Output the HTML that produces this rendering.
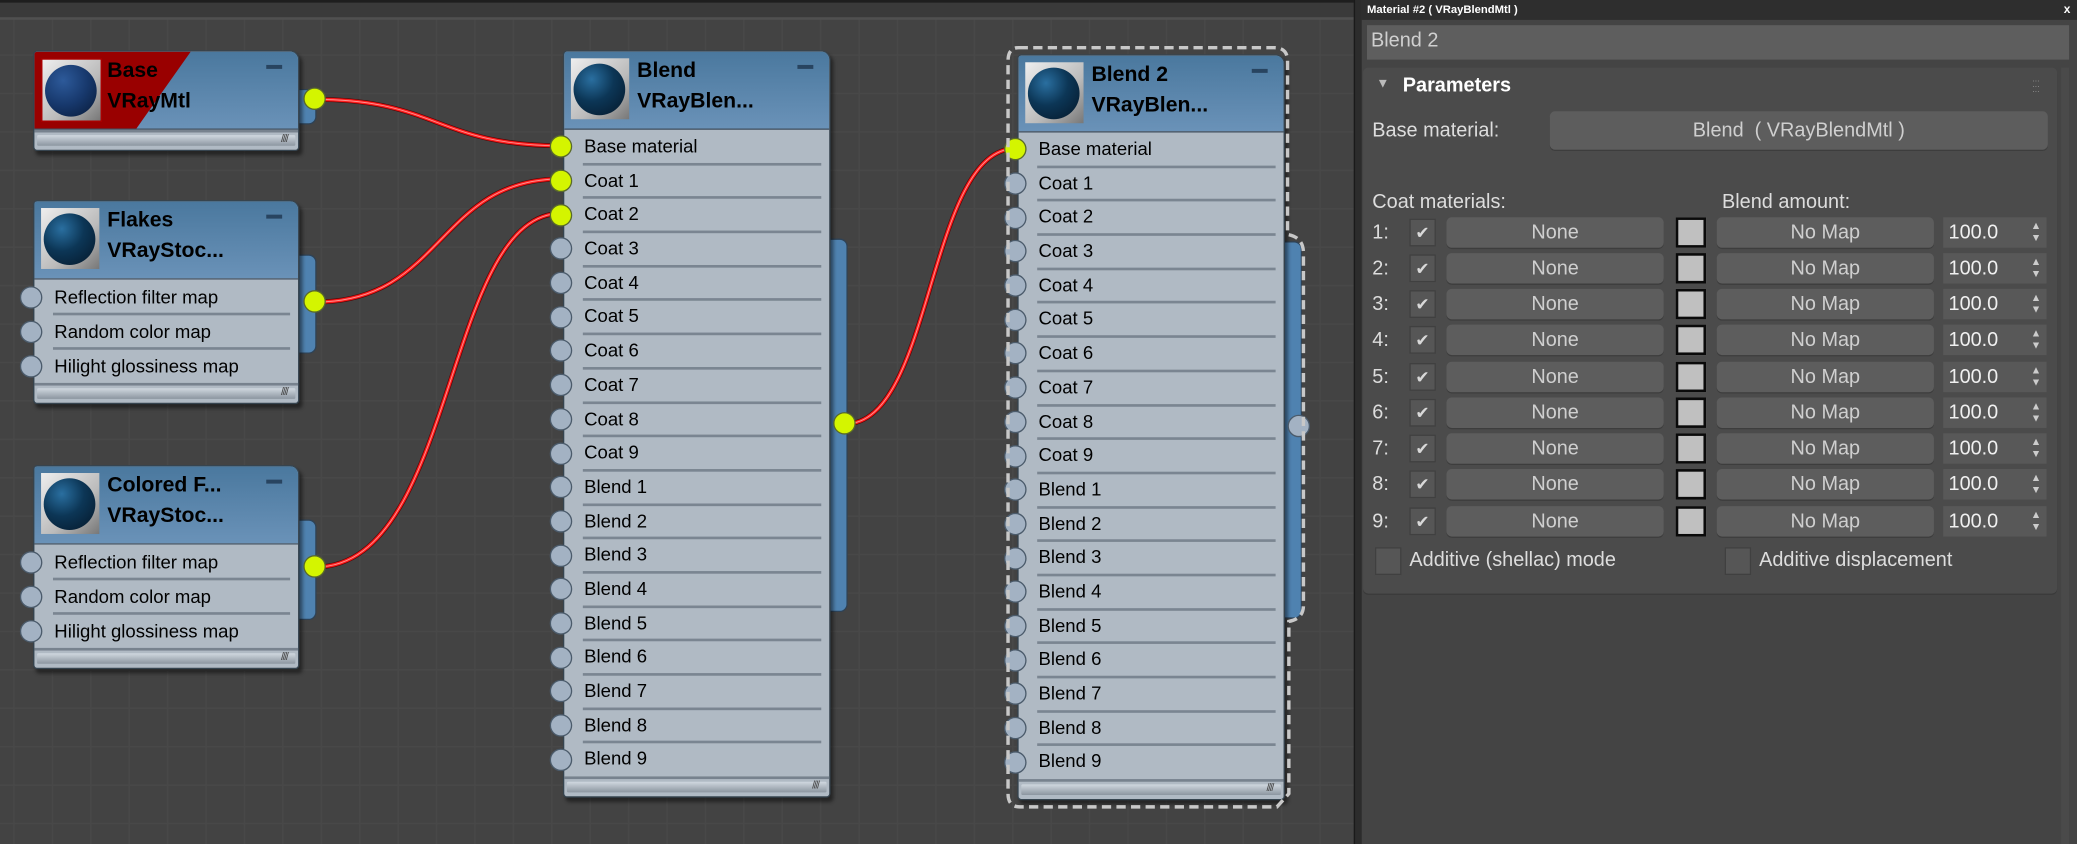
<!DOCTYPE html>
<html><head><meta charset="utf-8"><style>
html,body{margin:0;padding:0;width:2077px;height:844px;overflow:hidden;background:#444}
#s{position:absolute;left:0;top:0;width:1568px;height:637px;transform:scale(1.32462,1.32496);transform-origin:0 0;font-family:"Liberation Sans",Arial,sans-serif}
#ed{position:absolute;left:0;top:0;width:1024px;height:637px;background-color:#434343;
background-image:linear-gradient(#484848 1px,transparent 1px),linear-gradient(90deg,#484848 1px,transparent 1px);background-size:29px 29px;background-position:10px 12px}
#topbar{position:absolute;left:0;top:0;width:1024px;height:15px;background:#3a3a3a;border-top:2px solid #1e1e1e;border-bottom:2px solid #505050;box-sizing:border-box}
.node{position:absolute;background:#b0bac4;border:1.5px solid #36444f;border-radius:3px 7px 3px 3px;box-shadow:2px 3px 3px rgba(0,0,0,.45);z-index:3;width:199px}
.hdr{position:relative;background:linear-gradient(#4a789e,#6a92b8);border-bottom:1.5px solid #3c4c5c;border-radius:2px 6px 0 0;overflow:hidden}
.th{position:absolute;left:5px;top:5px;width:44px;height:46px;background:linear-gradient(135deg,#eee,#bbb 60%,#777)}
.sph{position:absolute;left:2px;top:4px;width:39px;height:39px;border-radius:50%;background:radial-gradient(circle at 35% 30%,#2a6fa0,#0c3656 45%,#061c30 90%)}
.t1,.t2{position:absolute;left:55px;font-weight:bold;font-size:16px;color:#000;white-space:nowrap}
.t1{top:6px}.t2{top:29px}
.mn{position:absolute;right:12px;top:10px;width:12px;height:3px;background:#284460}
.r{position:relative;height:25.7px;line-height:25.7px;padding-left:15px;font-size:14px;color:#000;white-space:nowrap}
.r:after{content:"";position:absolute;left:14px;right:6px;bottom:-1px;height:2px;background:#7a8591}
.r.l:after{display:none}
.so{position:absolute;left:-11px;top:50%;margin-top:-8.5px;width:15px;height:15px;border-radius:50%;background:#a3b2c3;border:1.5px solid #4b5b6b}
.so.y{background:#d4f500;border-color:#5a6a2a}
.ft{border-top:2px solid #77828e;height:13px;position:relative}
.ft:before{content:"";position:absolute;left:2px;right:2px;top:2px;height:8px;background:linear-gradient(#d0d8e0,#8c96a0);border-radius:1px}
.ft:after{content:"////";position:absolute;right:8px;top:0px;font-size:8px;line-height:10px;color:#444;letter-spacing:-1px}
.tab{position:absolute;width:12px;background:#4f82b0;border:1.5px solid #2e4256;border-left:none;border-radius:0 6px 6px 0;z-index:2}
.os{position:absolute;width:15px;height:15px;border-radius:50%;background:#d4f500;border:1.5px solid #5a6a2a;z-index:4}
.os.g{background:#a3b2c3;border-color:#4b5b6b}
#wires{position:absolute;left:0;top:0;z-index:1}
#sel{position:absolute;left:0;top:0;z-index:5}
#div{position:absolute;left:1022px;top:0;width:6px;height:637px;background:#2c2c2c;border-left:1px solid #1a1a1a}
#rp{position:absolute;left:1028px;top:0;width:540px;height:637px;background:#444;color:#ddd}
#tt{position:absolute;left:0;top:0;width:540px;height:15px;background:#2e2e2e;font-size:8.5px;font-weight:bold;color:#fff;line-height:15px;padding-left:4px;box-sizing:border-box}
#tt b{position:absolute;right:5px;top:0;font-size:9px}
#nm{position:absolute;left:4px;top:19px;width:530px;height:26px;background:#5e5e5e;font-size:15px;color:#d0d0d0;line-height:24px;padding-left:3px;box-sizing:border-box}
#ro{position:absolute;left:1px;top:51px;width:524px;height:397px;background:#4b4b4b;border-radius:4px;box-shadow:0 1px 0 #3a3a3a}
#sb{position:absolute;left:528px;top:51px;width:6px;height:586px;background:#4a4a4a}
.a{position:absolute;font-size:15px;color:#ddd;white-space:nowrap}
.n{position:absolute;font-size:15px;color:#ddd;left:8px}
.btn{position:absolute;background:#5d5d5d;border-radius:4px;color:#cfcfcf;text-align:center;font-size:15px;box-shadow:0 1px 0 #3d3d3d}
.cb{position:absolute;width:18px;height:19px;background:#565656;border:1px solid #404040;color:#d8d8d8;font-size:13px;text-align:center;line-height:19px}
.sw{position:absolute;width:19px;height:19px;background:#c0c0c0;border:2px solid #0a0a0a}
.sp{position:absolute;width:78px;background:#585858;color:#f0f0f0;font-size:15px;padding-left:4px;box-sizing:border-box}
.sp i{position:absolute;right:4px;top:2px;font-style:normal;font-size:8px;line-height:9px;color:#ccc}
</style></head><body><div id="s">
<div id="ed"></div>
<div id="topbar"></div>

<svg id="wires" width="1024" height="637">
<g fill="none" stroke-linecap="round">
<g stroke="#5a0000" stroke-width="3.6">
<path d="M238,75 C330,75 330,110 424,110"/><path d="M238,228 C335,228 330,135 424,135"/><path d="M238,428 C345,428 335,161 424,161"/><path d="M638,320 C705,320 700,112 767,112"/></g>
<g stroke="#ff1c1c" stroke-width="2.6">
<path d="M238,75 C330,75 330,110 424,110"/><path d="M238,228 C335,228 330,135 424,135"/><path d="M238,428 C345,428 335,161 424,161"/><path d="M638,320 C705,320 700,112 767,112"/></g>
<g stroke="#ff9090" stroke-width="0.7">
<path d="M238,75 C330,75 330,110 424,110"/><path d="M238,228 C335,228 330,135 424,135"/><path d="M238,428 C345,428 335,161 424,161"/><path d="M638,320 C705,320 700,112 767,112"/></g>
</g></svg>

<div class="tab" style="left:226px;top:67px;height:25px"></div>
<div class="os" style="left:229px;top:66px"></div>
<div class="tab" style="left:226px;top:192px;height:73px"></div>
<div class="os" style="left:229px;top:219px"></div>
<div class="tab" style="left:226px;top:392px;height:74px"></div>
<div class="os" style="left:229px;top:419px"></div>
<div class="tab" style="left:627px;top:180px;height:280px"></div>
<div class="os" style="left:629px;top:311px"></div>
<div class="tab" style="left:970px;top:182px;height:283px"></div>
<div class="os g" style="left:972px;top:313px"></div>

<div class="node" style="left:25px;top:38px">
<div class="hdr" style="height:58px">
<svg style="position:absolute;left:0;top:0" width="199" height="58"><polygon points="0,0 118,0 77,58 0,58" fill="#990000"/></svg>
<div class="th" style="border:1px solid #a00;left:5px"><div class="sph" style="background:radial-gradient(circle at 35% 30%,#2d5a9a,#17386c 50%,#0b1f40 90%)"></div></div>
<div class="t1">Base</div><div class="t2">VRayMtl</div><div class="mn"></div></div>
<div class="ft"></div></div>

<div class="node" style="left:25px;top:151px">
<div class="hdr" style="height:58px"><div class="th"><div class="sph"></div></div><div class="t1">Flakes</div><div class="t2">VRayStoc...</div><div class="mn"></div></div>
<div class="r" style="height:26px;line-height:26px"><span class="so"></span>Reflection filter map</div>
<div class="r" style="height:26px;line-height:26px"><span class="so"></span>Random color map</div>
<div class="r l" style="height:26px;line-height:26px"><span class="so"></span>Hilight glossiness map</div>
<div class="ft"></div></div>

<div class="node" style="left:25px;top:351px">
<div class="hdr" style="height:58px"><div class="th"><div class="sph"></div></div><div class="t1">Colored F...</div><div class="t2">VRayStoc...</div><div class="mn"></div></div>
<div class="r" style="height:26px;line-height:26px"><span class="so"></span>Reflection filter map</div>
<div class="r" style="height:26px;line-height:26px"><span class="so"></span>Random color map</div>
<div class="r l" style="height:26px;line-height:26px"><span class="so"></span>Hilight glossiness map</div>
<div class="ft"></div></div>

<div class="node" style="left:425px;top:38px;width:200px">
<div class="hdr" style="height:58px"><div class="th"><div class="sph"></div></div><div class="t1">Blend</div><div class="t2">VRayBlen...</div><div class="mn"></div></div>
<div class="r"><span class="so y"></span>Base material</div>
<div class="r"><span class="so y"></span>Coat 1</div>
<div class="r"><span class="so y"></span>Coat 2</div>
<div class="r"><span class="so"></span>Coat 3</div>
<div class="r"><span class="so"></span>Coat 4</div>
<div class="r"><span class="so"></span>Coat 5</div>
<div class="r"><span class="so"></span>Coat 6</div>
<div class="r"><span class="so"></span>Coat 7</div>
<div class="r"><span class="so"></span>Coat 8</div>
<div class="r"><span class="so"></span>Coat 9</div>
<div class="r"><span class="so"></span>Blend 1</div>
<div class="r"><span class="so"></span>Blend 2</div>
<div class="r"><span class="so"></span>Blend 3</div>
<div class="r"><span class="so"></span>Blend 4</div>
<div class="r"><span class="so"></span>Blend 5</div>
<div class="r"><span class="so"></span>Blend 6</div>
<div class="r"><span class="so"></span>Blend 7</div>
<div class="r"><span class="so"></span>Blend 8</div>
<div class="r l"><span class="so"></span>Blend 9</div>
<div class="ft"></div></div>

<div class="node" style="left:768px;top:41px;width:200px">
<div class="hdr" style="height:57px"><div class="th"><div class="sph"></div></div><div class="t1">Blend 2</div><div class="t2">VRayBlen...</div><div class="mn"></div></div>
<div class="r"><span class="so y"></span>Base material</div>
<div class="r"><span class="so"></span>Coat 1</div>
<div class="r"><span class="so"></span>Coat 2</div>
<div class="r"><span class="so"></span>Coat 3</div>
<div class="r"><span class="so"></span>Coat 4</div>
<div class="r"><span class="so"></span>Coat 5</div>
<div class="r"><span class="so"></span>Coat 6</div>
<div class="r"><span class="so"></span>Coat 7</div>
<div class="r"><span class="so"></span>Coat 8</div>
<div class="r"><span class="so"></span>Coat 9</div>
<div class="r"><span class="so"></span>Blend 1</div>
<div class="r"><span class="so"></span>Blend 2</div>
<div class="r"><span class="so"></span>Blend 3</div>
<div class="r"><span class="so"></span>Blend 4</div>
<div class="r"><span class="so"></span>Blend 5</div>
<div class="r"><span class="so"></span>Blend 6</div>
<div class="r"><span class="so"></span>Blend 7</div>
<div class="r"><span class="so"></span>Blend 8</div>
<div class="r l"><span class="so"></span>Blend 9</div>
<div class="ft"></div></div>

<svg id="sel" width="1024" height="637"><path d="M769,36 H962 Q972,36 972,46 V177 Q984,179 984,191 V457 Q984,467 973,469 V599 L964,609 H770 Q761,609 761,599 V46 Q761,36 769,36 Z" fill="none" stroke="#c8c8c8" stroke-width="2.6" stroke-dasharray="7 4"/></svg>

<div id="div"></div>
<div id="rp">
<div id="tt">Material #2 ( VRayBlendMtl )<b>x</b></div>
<div id="nm">Blend 2</div>
<div id="ro"></div>
<div id="sb"></div>
<div class="a" style="left:11px;top:58px;font-size:10px;color:#bbb">▼</div>
<div class="a" style="left:31px;top:56px;font-weight:bold;color:#fff">Parameters</div>
<div class="a" style="left:506px;top:60px;font-size:7px;color:#888;line-height:4px;letter-spacing:-0.5px">···<br>···<br>···</div>
<div class="a" style="left:8px;top:90px">Base material:</div>
<div class="btn" style="left:142px;top:84px;width:376px;height:29px;line-height:29px">Blend&nbsp; ( VRayBlendMtl )</div>
<div class="a" style="left:8px;top:144px">Coat materials:</div>
<div class="a" style="left:272px;top:144px">Blend amount:</div>

<div class="n" style="top:167px">1:</div><div class="cb" style="left:36px;top:165px">✔</div><div class="btn" style="left:64px;top:164px;width:164px;height:23px;line-height:23px">None</div><div class="sw" style="left:237px;top:164px"></div><div class="btn" style="left:268px;top:164px;width:164px;height:23px;line-height:23px">No Map</div><div class="sp" style="left:439px;top:164px;height:23px;line-height:23px">100.0<i>▲<br>▼</i></div>
<div class="n" style="top:194px">2:</div><div class="cb" style="left:36px;top:192px">✔</div><div class="btn" style="left:64px;top:191px;width:164px;height:23px;line-height:23px">None</div><div class="sw" style="left:237px;top:191px"></div><div class="btn" style="left:268px;top:191px;width:164px;height:23px;line-height:23px">No Map</div><div class="sp" style="left:439px;top:191px;height:23px;line-height:23px">100.0<i>▲<br>▼</i></div>
<div class="n" style="top:221px">3:</div><div class="cb" style="left:36px;top:219px">✔</div><div class="btn" style="left:64px;top:218px;width:164px;height:23px;line-height:23px">None</div><div class="sw" style="left:237px;top:218px"></div><div class="btn" style="left:268px;top:218px;width:164px;height:23px;line-height:23px">No Map</div><div class="sp" style="left:439px;top:218px;height:23px;line-height:23px">100.0<i>▲<br>▼</i></div>
<div class="n" style="top:248px">4:</div><div class="cb" style="left:36px;top:246px">✔</div><div class="btn" style="left:64px;top:245px;width:164px;height:23px;line-height:23px">None</div><div class="sw" style="left:237px;top:245px"></div><div class="btn" style="left:268px;top:245px;width:164px;height:23px;line-height:23px">No Map</div><div class="sp" style="left:439px;top:245px;height:23px;line-height:23px">100.0<i>▲<br>▼</i></div>
<div class="n" style="top:276px">5:</div><div class="cb" style="left:36px;top:274px">✔</div><div class="btn" style="left:64px;top:273px;width:164px;height:23px;line-height:23px">None</div><div class="sw" style="left:237px;top:273px"></div><div class="btn" style="left:268px;top:273px;width:164px;height:23px;line-height:23px">No Map</div><div class="sp" style="left:439px;top:273px;height:23px;line-height:23px">100.0<i>▲<br>▼</i></div>
<div class="n" style="top:303px">6:</div><div class="cb" style="left:36px;top:301px">✔</div><div class="btn" style="left:64px;top:300px;width:164px;height:23px;line-height:23px">None</div><div class="sw" style="left:237px;top:300px"></div><div class="btn" style="left:268px;top:300px;width:164px;height:23px;line-height:23px">No Map</div><div class="sp" style="left:439px;top:300px;height:23px;line-height:23px">100.0<i>▲<br>▼</i></div>
<div class="n" style="top:330px">7:</div><div class="cb" style="left:36px;top:328px">✔</div><div class="btn" style="left:64px;top:327px;width:164px;height:23px;line-height:23px">None</div><div class="sw" style="left:237px;top:327px"></div><div class="btn" style="left:268px;top:327px;width:164px;height:23px;line-height:23px">No Map</div><div class="sp" style="left:439px;top:327px;height:23px;line-height:23px">100.0<i>▲<br>▼</i></div>
<div class="n" style="top:357px">8:</div><div class="cb" style="left:36px;top:355px">✔</div><div class="btn" style="left:64px;top:354px;width:164px;height:23px;line-height:23px">None</div><div class="sw" style="left:237px;top:354px"></div><div class="btn" style="left:268px;top:354px;width:164px;height:23px;line-height:23px">No Map</div><div class="sp" style="left:439px;top:354px;height:23px;line-height:23px">100.0<i>▲<br>▼</i></div>
<div class="n" style="top:385px">9:</div><div class="cb" style="left:36px;top:383px">✔</div><div class="btn" style="left:64px;top:382px;width:164px;height:23px;line-height:23px">None</div><div class="sw" style="left:237px;top:382px"></div><div class="btn" style="left:268px;top:382px;width:164px;height:23px;line-height:23px">No Map</div><div class="sp" style="left:439px;top:382px;height:23px;line-height:23px">100.0<i>▲<br>▼</i></div>

<div class="cb" style="left:10px;top:413px"></div><div class="a" style="left:36px;top:414px">Additive (shellac) mode</div>
<div class="cb" style="left:274px;top:413px"></div><div class="a" style="left:300px;top:414px">Additive displacement</div>
</div>
</div></body></html>
